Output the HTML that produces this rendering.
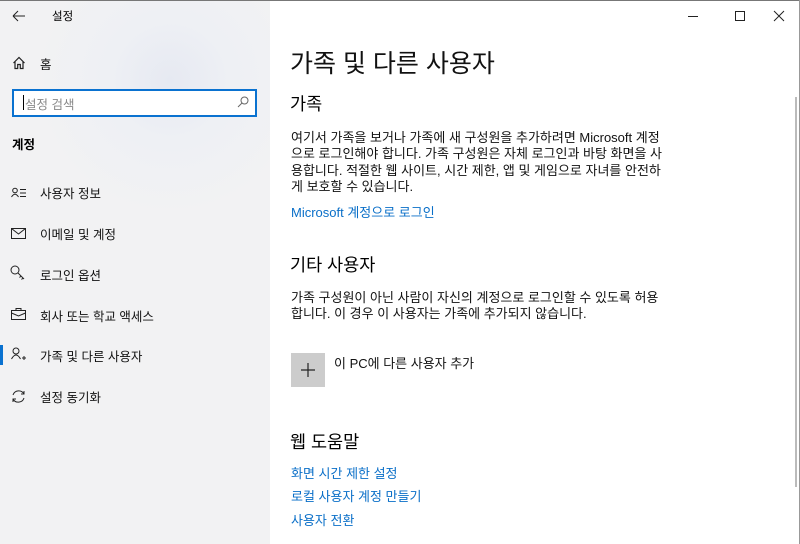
<!DOCTYPE html>
<html><head><meta charset="utf-8"><style>
*{margin:0;padding:0;box-sizing:border-box}
body{width:800px;height:544px;overflow:hidden;font-family:"Liberation Sans","Noto Sans CJK KR",sans-serif;color:#000;position:relative;background:#fff}
.side{position:absolute;left:0;top:0;width:270px;height:544px;background:radial-gradient(circle at 170px 80px,#e6e9f2 0,#eef0f4 60px,#f2f2f3 140px);}
.a{position:absolute;white-space:nowrap}
.nav{font-size:12.5px;color:#111}
.p{font-size:13px;line-height:16.4px;color:#111}
.lk{color:#0a6fc8;font-size:13px}
svg{position:absolute}
</style></head><body>
<div class="side"></div>
<div style="position:absolute;left:0;top:0;width:800px;height:1px;background:#777"></div>
<div style="position:absolute;left:799px;top:0;width:1px;height:544px;background:#999"></div>
<svg style="left:12px;top:10px" width="14" height="12"><path d="M1 6H13M1 6L6 1M1 6L6 11" stroke="#222" stroke-width="1" fill="none"/></svg>
<div class="a" style="left:52px;top:8px;font-size:11.5px">설정</div>
<svg style="left:12px;top:56px" width="14" height="14"><path d="M1.5 7L7 1.5L12.5 7M3 5.5V12.5H5.7V8.5H8.3V12.5H11V5.5" stroke="#222" stroke-width="1.2" fill="none"/></svg>
<div class="a nav" style="left:40px;top:54px">홈</div>
<div style="position:absolute;left:12px;top:89px;width:245px;height:28px;border:2px solid #0a72d0;background:#fff"></div>
<div style="position:absolute;left:23px;top:95px;width:1px;height:15px;background:#000"></div>
<div class="a" style="left:25px;top:94px;font-size:12.5px;color:#888">설정 검색</div>
<svg style="left:237px;top:96px" width="12" height="12"><circle cx="7.5" cy="4.5" r="3.5" stroke="#666" fill="none"/><path d="M5 7L1 11" stroke="#666"/></svg>
<div class="a" style="left:12px;top:134px;font-size:12.5px;font-weight:bold">계정</div>
<svg style="left:11px;top:187px" width="16" height="12"><circle cx="4" cy="3.5" r="2.3" stroke="#222" fill="none"/><path d="M0.5 10Q4 4.5 7.5 10M9 2.5H15M9 6H15M9 9.5H15" stroke="#222" fill="none"/></svg>
<div class="a nav" style="left:40px;top:183px">사용자 정보</div>
<svg style="left:11px;top:228px" width="15" height="11"><rect x="0.5" y="0.5" width="14" height="10" stroke="#222" fill="none"/><path d="M0.5 0.5L7.5 6L14.5 0.5" stroke="#222" fill="none"/></svg>
<div class="a nav" style="left:40px;top:224px">이메일 및 계정</div>
<svg style="left:10px;top:265px" width="16" height="16"><circle cx="5" cy="5" r="4" stroke="#222" fill="none"/><path d="M8 8L14 14M11 11L9.5 12.5M13 13L11.5 14.5" stroke="#222" fill="none"/></svg>
<div class="a nav" style="left:40px;top:265px">로그인 옵션</div>
<svg style="left:11px;top:308px" width="16" height="12"><rect x="0.5" y="2.5" width="14" height="9" stroke="#222" fill="none"/><path d="M5 2.5V0.5H10V2.5M0.5 5L7.5 8L14.5 5" stroke="#222" fill="none"/></svg>
<div class="a nav" style="left:40px;top:306px">회사 또는 학교 액세스</div>
<div style="position:absolute;left:0;top:345px;width:3px;height:20px;background:#0a72d0"></div>
<svg style="left:11px;top:347px" width="16" height="15"><circle cx="5" cy="4" r="3" stroke="#222" fill="none"/><path d="M0.5 12Q5 4 9.5 12M11 11H15M13 9V13" stroke="#222" fill="none"/></svg>
<div class="a nav" style="left:40px;top:346px">가족 및 다른 사용자</div>
<svg style="left:11px;top:389px" width="15" height="15"><path d="M2 6A6 6 0 0 1 13 5M13 9A6 6 0 0 1 2 10M13 2V5H10M2 13V10H5" stroke="#222" fill="none"/></svg>
<div class="a nav" style="left:40px;top:387px">설정 동기화</div>

<svg style="left:688px;top:10px" width="100" height="12"><path d="M0 6.5H10" stroke="#222"/><rect x="47.5" y="1.5" width="9" height="9" stroke="#222" fill="none"/><path d="M86 1L96 11M96 1L86 11" stroke="#222"/></svg>
<div style="position:absolute;left:795px;top:97px;width:2px;height:390px;background:#bbb"></div>

<div class="a" style="left:290px;top:44px;font-size:25px;color:#111">가족 및 다른 사용자</div>
<div class="a" style="left:290px;top:91px;font-size:17.5px">가족</div>
<div class="a p" style="left:291px;top:130px">여기서 가족을 보거나 가족에 새 구성원을 추가하려면 Microsoft 계정<br>으로 로그인해야 합니다. 가족 구성원은 자체 로그인과 바탕 화면을 사<br>용합니다. 적절한 웹 사이트, 시간 제한, 앱 및 게임으로 자녀를 안전하<br>게 보호할 수 있습니다.</div>
<div class="a lk" style="left:291px;top:202px">Microsoft 계정으로 로그인</div>
<div class="a" style="left:290px;top:252px;font-size:17.5px">기타 사용자</div>
<div class="a p" style="left:291px;top:290px">가족 구성원이 아닌 사람이 자신의 계정으로 로그인할 수 있도록 허용<br>합니다. 이 경우 이 사용자는 가족에 추가되지 않습니다.</div>
<div style="position:absolute;left:291px;top:353px;width:34px;height:34px;background:#ccc"></div>
<svg style="left:300px;top:362px" width="16" height="16"><path d="M8 1V15M1 8H15" stroke="#222" stroke-width="1.2"/></svg>
<div class="a" style="left:334px;top:353px;font-size:13px;color:#111">이 PC에 다른 사용자 추가</div>
<div class="a" style="left:290px;top:429px;font-size:17.5px">웹 도움말</div>
<div class="a lk" style="left:291px;top:463px">화면 시간 제한 설정</div>
<div class="a lk" style="left:291px;top:486px">로컬 사용자 계정 만들기</div>
<div class="a lk" style="left:291px;top:510px">사용자 전환</div>
</body></html>
